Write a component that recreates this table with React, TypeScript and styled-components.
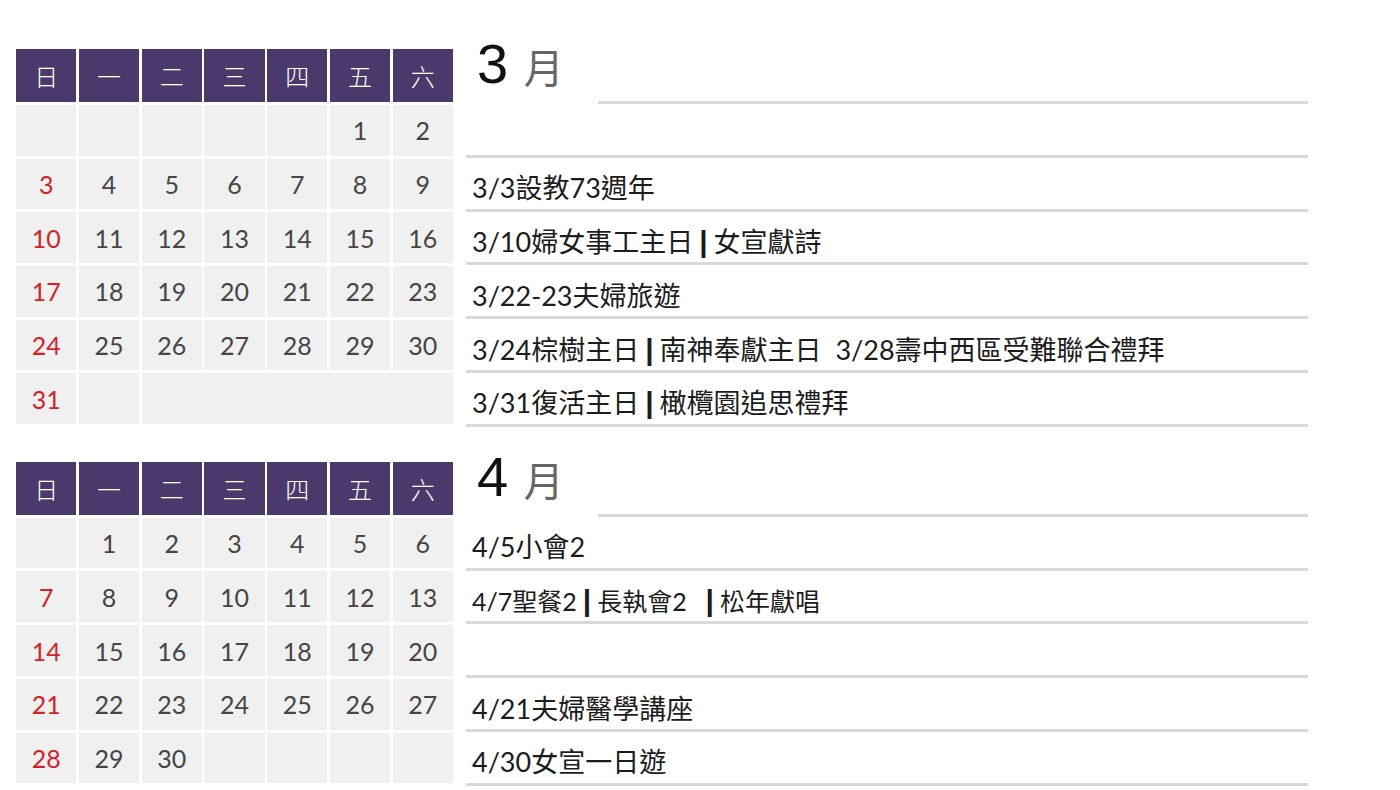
import React from "react";
import styled, { createGlobalStyle } from "styled-components";

const Global = createGlobalStyle`
  html, body { margin: 0; padding: 0; background: #ffffff; }
  body { font-family: "Lato", "Noto Sans CJK TC", sans-serif; }
`;

const Page = styled.div`
  width: 1400px;
  height: 790px;
  box-sizing: border-box;
  padding: 49px 0 0 16px;
  display: flex;
  flex-direction: column;
  gap: 35px;
  overflow: hidden;
`;

const MonthSection = styled.section`
  display: flex;
  align-items: flex-start;
  gap: 13px;
`;

const Calendar = styled.div`
  width: 437px;
  flex-shrink: 0;
  display: grid;
  grid-template-columns: repeat(7, 1fr);
  grid-template-rows: 53px;
  grid-auto-rows: 50.7px;
  column-gap: 2.5px;
  row-gap: 3px;
`;

const HeadCell = styled.div`
  background: #4b396b;
  color: #ffffff;
  display: flex;
  align-items: center;
  justify-content: center;
  font-family: "Noto Sans CJK TC", sans-serif;
  font-weight: 300;
  font-size: 24px;
`;

const DayCell = styled.div<{ $sunday?: boolean; $span?: number }>`
  background: #f0f0f0;
  display: flex;
  align-items: center;
  justify-content: center;
  font-family: "Lato", sans-serif;
  font-size: 25px;
  color: ${(p) => (p.$sunday ? "#d61f26" : "#454545")};
  grid-column: ${(p) => (p.$span ? `span ${p.$span}` : "auto")};
`;

const Events = styled.div`
  width: 842px;
  display: flex;
  flex-direction: column;
`;

const TitleRow = styled.div`
  height: 55px;
  display: flex;
`;

const MonthLabel = styled.div`
  width: 132px;
  flex-shrink: 0;
  box-sizing: border-box;
  padding-left: 11px;
  font-family: "Liberation Sans", sans-serif;
  font-size: 56px;
  line-height: 30px;
  color: #111111;
  white-space: pre;
`;

const MonthChar = styled.span`
  font-family: "Noto Sans CJK TC", sans-serif;
  font-size: 40px;
  color: #666666;
`;

const Rule = styled.div`
  flex: 1;
  align-self: flex-end;
  height: 3px;
  background: #d9d9d9;
`;

const EventRow = styled.div<{ $small?: boolean }>`
  height: 53.8px;
  box-sizing: border-box;
  border-bottom: 3px solid #d9d9d9;
  padding: 10px 0 0 6px;
  display: flex;
  align-items: center;
  font-family: "Lato", "Noto Sans CJK TC", sans-serif;
  font-size: ${(p) => (p.$small ? "25px" : "27px")};
  line-height: 30px;
  color: #1c1c1c;
  white-space: pre;
`;

const Bar = styled.span`
  font-family: "Liberation Sans", sans-serif;
  font-weight: 700;
  font-size: 30px;
  padding: 0 6px 0 6px;
  color: #1c1c1c;
`;

const WEEK = ["日", "一", "二", "三", "四", "五", "六"];

type Cell = { day?: number; span?: number };
type EventItem = { parts: string[]; small?: boolean };

function buildCells(startDow: number, days: number, mergeTail?: boolean): Cell[] {
  const cells: Cell[] = [];
  for (let i = 0; i < startDow; i++) cells.push({});
  for (let d = 1; d <= days; d++) cells.push({ day: d });
  const rem = (7 - (cells.length % 7)) % 7;
  if (mergeTail && rem > 1) {
    cells.push({});
    cells.push({ span: rem - 1 });
  } else {
    for (let i = 0; i < rem; i++) cells.push({});
  }
  return cells;
}

function MonthCalendar({ cells }: { cells: Cell[] }) {
  let col = 0;
  return (
    <Calendar>
      {WEEK.map((w) => (
        <HeadCell key={w}>{w}</HeadCell>
      ))}
      {cells.map((c, i) => {
        const sunday = col === 0;
        col = (col + (c.span || 1)) % 7;
        return (
          <DayCell key={i} $sunday={sunday} $span={c.span}>
            {c.day ?? ""}
          </DayCell>
        );
      })}
    </Calendar>
  );
}

function EventLine({ item }: { item: EventItem }) {
  return (
    <EventRow $small={item.small}>
      {item.parts.map((p, i) => (
        <React.Fragment key={i}>
          {i > 0 && <Bar>|</Bar>}
          {p}
        </React.Fragment>
      ))}
    </EventRow>
  );
}

const MARCH_EVENTS: EventItem[] = [
  { parts: [""] },
  { parts: ["3/3設教73週年"] },
  { parts: ["3/10婦女事工主日", "女宣獻詩"] },
  { parts: ["3/22-23夫婦旅遊"] },
  { parts: ["3/24棕樹主日", "南神奉獻主日  3/28壽中西區受難聯合禮拜"] },
  { parts: ["3/31復活主日", "橄欖園追思禮拜"] },
];

const APRIL_EVENTS: EventItem[] = [
  { parts: ["4/5小會2"] },
  { parts: ["4/7聖餐2", "長執會2  ", "松年獻唱"], small: true },
  { parts: [""] },
  { parts: ["4/21夫婦醫學講座"] },
  { parts: ["4/30女宣一日遊"] },
];

function MonthBlock({
  month,
  cells,
  events,
}: {
  month: string;
  cells: Cell[];
  events: EventItem[];
}) {
  return (
    <MonthSection>
      <MonthCalendar cells={cells} />
      <Events>
        <TitleRow>
          <MonthLabel>
            {month + " "}
            <MonthChar>月</MonthChar>
          </MonthLabel>
          <Rule />
        </TitleRow>
        {events.map((e, i) => (
          <EventLine key={i} item={e} />
        ))}
      </Events>
    </MonthSection>
  );
}

export default function App() {
  return (
    <>
      <Global />
      <Page>
        <MonthBlock month="3" cells={buildCells(5, 31, true)} events={MARCH_EVENTS} />
        <MonthBlock month="4" cells={buildCells(1, 30)} events={APRIL_EVENTS} />
      </Page>
    </>
  );
}
